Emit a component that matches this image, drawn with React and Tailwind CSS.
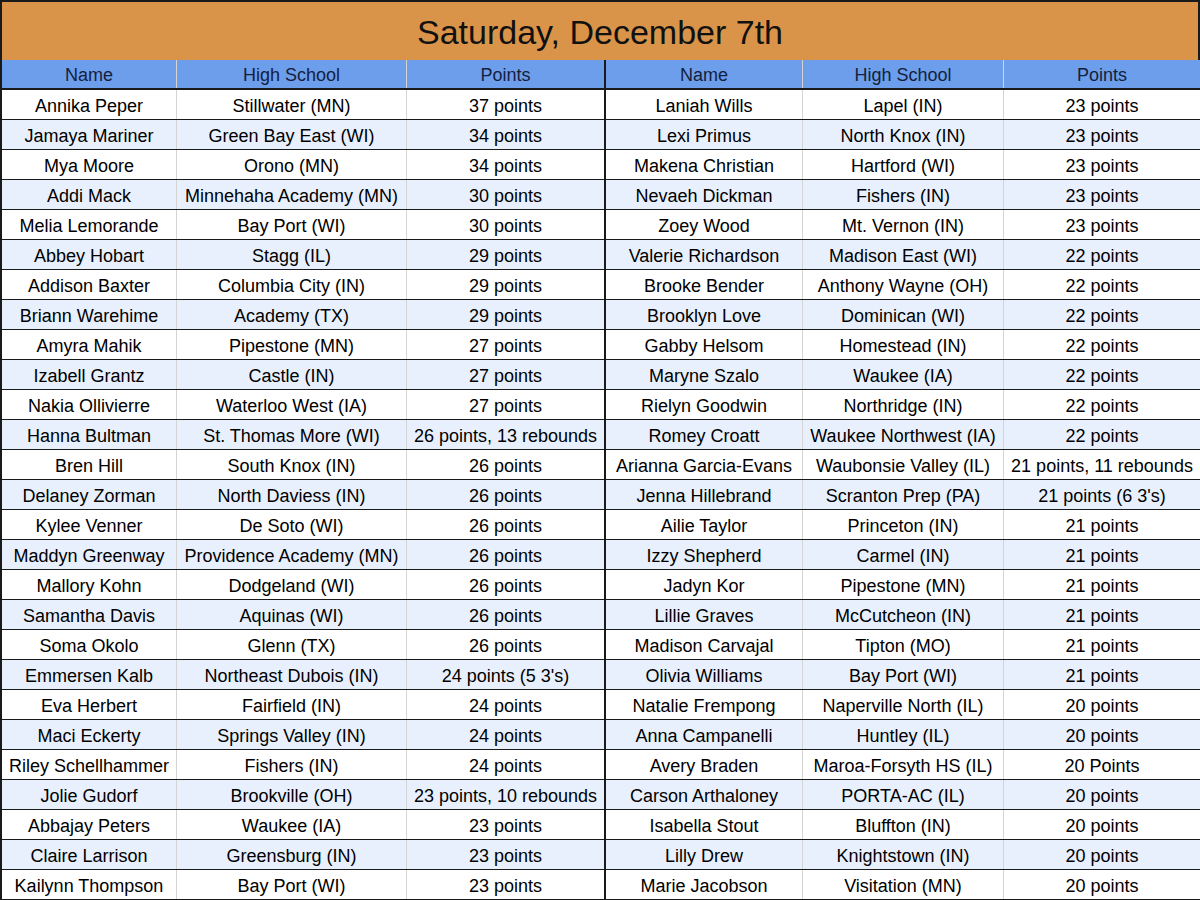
import React from 'react';

const leftRows = [
  ['Annika Peper', 'Stillwater (MN)', '37 points'],
  ['Jamaya Mariner', 'Green Bay East (WI)', '34 points'],
  ['Mya Moore', 'Orono (MN)', '34 points'],
  ['Addi Mack', 'Minnehaha Academy (MN)', '30 points'],
  ['Melia Lemorande', 'Bay Port (WI)', '30 points'],
  ['Abbey Hobart', 'Stagg (IL)', '29 points'],
  ['Addison Baxter', 'Columbia City (IN)', '29 points'],
  ['Briann Warehime', 'Academy (TX)', '29 points'],
  ['Amyra Mahik', 'Pipestone (MN)', '27 points'],
  ['Izabell Grantz', 'Castle (IN)', '27 points'],
  ['Nakia Ollivierre', 'Waterloo West (IA)', '27 points'],
  ['Hanna Bultman', 'St. Thomas More (WI)', '26 points, 13 rebounds'],
  ['Bren Hill', 'South Knox (IN)', '26 points'],
  ['Delaney Zorman', 'North Daviess (IN)', '26 points'],
  ['Kylee Venner', 'De Soto (WI)', '26 points'],
  ['Maddyn Greenway', 'Providence Academy (MN)', '26 points'],
  ['Mallory Kohn', 'Dodgeland (WI)', '26 points'],
  ['Samantha Davis', 'Aquinas (WI)', '26 points'],
  ['Soma Okolo', 'Glenn (TX)', '26 points'],
  ['Emmersen Kalb', 'Northeast Dubois (IN)', "24 points (5 3's)"],
  ['Eva Herbert', 'Fairfield (IN)', '24 points'],
  ['Maci Eckerty', 'Springs Valley (IN)', '24 points'],
  ['Riley Schellhammer', 'Fishers (IN)', '24 points'],
  ['Jolie Gudorf', 'Brookville (OH)', '23 points, 10 rebounds'],
  ['Abbajay Peters', 'Waukee (IA)', '23 points'],
  ['Claire Larrison', 'Greensburg (IN)', '23 points'],
  ['Kailynn Thompson', 'Bay Port (WI)', '23 points'],
];

const rightRows = [
  ['Laniah Wills', 'Lapel (IN)', '23 points'],
  ['Lexi Primus', 'North Knox (IN)', '23 points'],
  ['Makena Christian', 'Hartford (WI)', '23 points'],
  ['Nevaeh Dickman', 'Fishers (IN)', '23 points'],
  ['Zoey Wood', 'Mt. Vernon (IN)', '23 points'],
  ['Valerie Richardson', 'Madison East (WI)', '22 points'],
  ['Brooke Bender', 'Anthony Wayne (OH)', '22 points'],
  ['Brooklyn Love', 'Dominican (WI)', '22 points'],
  ['Gabby Helsom', 'Homestead (IN)', '22 points'],
  ['Maryne Szalo', 'Waukee (IA)', '22 points'],
  ['Rielyn Goodwin', 'Northridge (IN)', '22 points'],
  ['Romey Croatt', 'Waukee Northwest (IA)', '22 points'],
  ['Arianna Garcia-Evans', 'Waubonsie Valley (IL)', '21 points, 11 rebounds'],
  ['Jenna Hillebrand', 'Scranton Prep (PA)', "21 points (6 3's)"],
  ['Ailie Taylor', 'Princeton (IN)', '21 points'],
  ['Izzy Shepherd', 'Carmel (IN)', '21 points'],
  ['Jadyn Kor', 'Pipestone (MN)', '21 points'],
  ['Lillie Graves', 'McCutcheon (IN)', '21 points'],
  ['Madison Carvajal', 'Tipton (MO)', '21 points'],
  ['Olivia Williams', 'Bay Port (WI)', '21 points'],
  ['Natalie Frempong', 'Naperville North (IL)', '20 points'],
  ['Anna Campanelli', 'Huntley (IL)', '20 points'],
  ['Avery Braden', 'Maroa-Forsyth HS (IL)', '20 Points'],
  ['Carson Arthaloney', 'PORTA-AC (IL)', '20 points'],
  ['Isabella Stout', 'Bluffton (IN)', '20 points'],
  ['Lilly Drew', 'Knightstown (IN)', '20 points'],
  ['Marie Jacobson', 'Visitation (MN)', '20 points'],
];

// vertical line after each column: light inside a half, dark at the middle and edge
const cellBorders = [
  'border-r border-[#d4d4d4]',
  'border-r border-[#d4d4d4]',
  'border-r-2 border-[#1a1a1a]',
  'border-r border-[#d4d4d4]',
  'border-r border-[#d4d4d4]',
  'border-r-2 border-[#1a1a1a]',
];

const gridCols = 'grid grid-cols-[175px_230px_199px_197px_201px_198px]';

function Cell({ index, children }) {
  return (
    <div className={`flex items-center justify-center whitespace-nowrap overflow-hidden pt-[3px] ${cellBorders[index]}`}>
      {children}
    </div>
  );
}

export default function App() {
  const headers = ['Name', 'High School', 'Points', 'Name', 'High School', 'Points'];

  return (
    <div
      className="w-[1200px] h-[900px] overflow-hidden bg-white text-black"
      style={{ fontFamily: '"Liberation Sans", Arial, sans-serif' }}
    >
      <div className="h-[60px] bg-[#da9449] border-t-2 border-l-2 border-r-2 border-[#1a1a1a] flex items-center justify-center text-[34px] text-[#111] pt-[2px]">
        Saturday, December 7th
      </div>

      <div className="border-l-2 border-[#1a1a1a]">
        <div className={`${gridCols} h-[30px] bg-[#6d9eeb] border-b-2 border-[#1a1a1a] text-[18px] text-[#14213d]`}>
          {headers.map((h, i) => (
            <Cell key={i} index={i}>{h}</Cell>
          ))}
        </div>

        {leftRows.map((left, r) => {
          const cells = [...left, ...rightRows[r]];
          return (
            <div
              key={r}
              className={`${gridCols} h-[30px] border-b border-[#1a1a1a] text-[18px] ${r % 2 === 0 ? 'bg-white' : 'bg-[#e8f0fe]'}`}
            >
              {cells.map((c, i) => (
                <Cell key={i} index={i}>{c}</Cell>
              ))}
            </div>
          );
        })}
      </div>
    </div>
  );
}
